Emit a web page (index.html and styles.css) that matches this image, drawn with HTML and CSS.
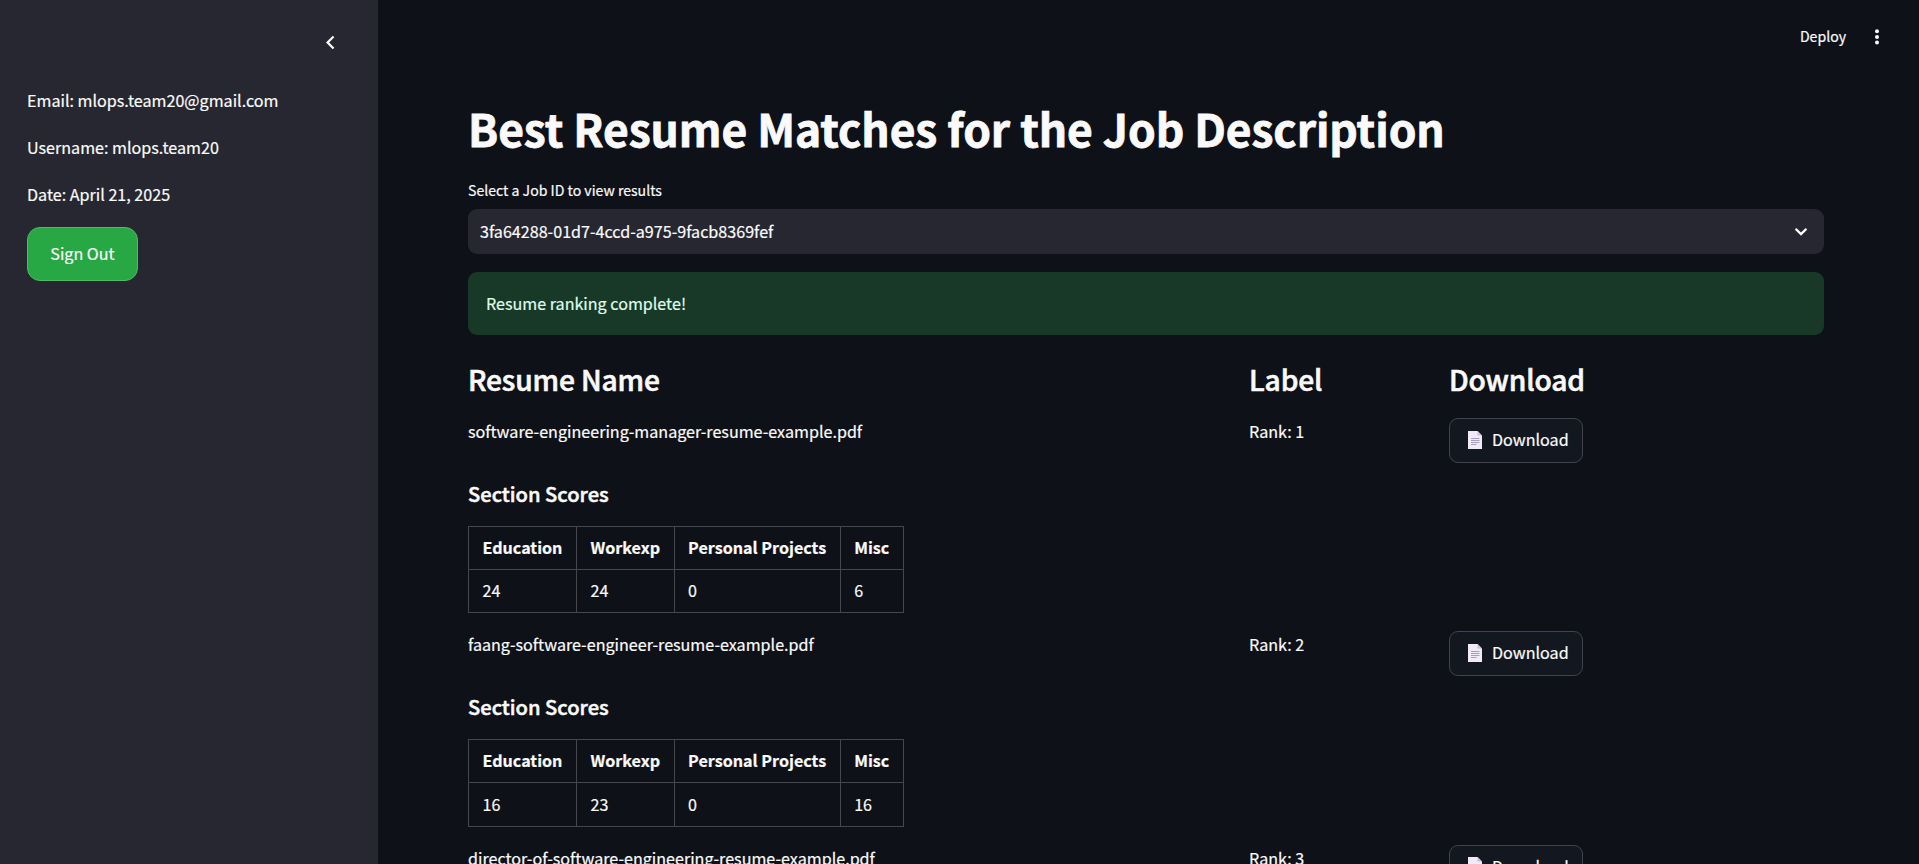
FILE: index.html
```
<!DOCTYPE html>
<html lang="en">
<head>
<meta charset="utf-8">
<title>Resume Matches</title>
<link rel="stylesheet" href="styles.css">
</head>
<body>
<svg class="defs" width="0" height="0">
  <symbol id="page" viewBox="0 0 16 20">
    <path d="M1 1h9.5l4.5 4.5V19H1z" fill="#f1eaf8"/>
    <path d="M10.5 1v4.5H15z" fill="#cbbedb"/>
    <path d="M4 8.5h8.5M4 10.5h8.5M4 12.5h8.5M4 14.5h5.5" stroke="#aa9fb8" fill="none"/>
  </symbol>
</svg>
<div class="app">
  <aside class="sidebar">
    <div class="collapse"><svg width="27" height="27" viewBox="0 0 24 24"><path d="M15.4 7.4 14 6l-6 6 6 6 1.4-1.4L10.8 12z" fill="#fafafa"/></svg></div>
    <p>Email: mlops.team20@gmail.com</p>
    <p>Username: mlops.team20</p>
    <p>Date: April 21, 2025</p>
    <button class="signout">Sign Out</button>
  </aside>
  <main class="main">
    <header class="toolbar">
      <span>Deploy</span>
      <svg width="6" height="18" viewBox="0 0 6 18" fill="#fafafa"><circle cx="3" cy="3.2" r="2"/><circle cx="3" cy="9" r="2"/><circle cx="3" cy="14.6" r="2"/></svg>
    </header>
    <div class="content">
      <h1>Best Resume Matches for the Job Description</h1>
      <label class="label">Select a Job ID to view results</label>
      <div class="select"><span>3fa64288-01d7-4ccd-a975-9facb8369fef</span>
        <svg width="12" height="8" viewBox="0 0 12 8"><path d="M1.2 1.4 6 6.1l4.8-4.7" stroke="#fafafa" stroke-width="2.2" fill="none" stroke-linecap="round"/></svg>
      </div>
      <div class="alert">Resume ranking complete!</div>
      <div class="row heads"><h2>Resume Name</h2><h2>Label</h2><h2>Download</h2></div>

      <section class="entry">
        <div class="row"><p>software-engineering-manager-resume-example.pdf</p><p>Rank: 1</p><button class="download"><svg width="16" height="20"><use href="#page"/></svg>Download</button></div>
        <h3>Section Scores</h3>
        <table>
          <tr><th>Education</th><th>Workexp</th><th>Personal Projects</th><th>Misc</th></tr>
          <tr><td>24</td><td>24</td><td>0</td><td>6</td></tr>
        </table>
      </section>

      <section class="entry">
        <div class="row"><p>faang-software-engineer-resume-example.pdf</p><p>Rank: 2</p><button class="download"><svg width="16" height="20"><use href="#page"/></svg>Download</button></div>
        <h3>Section Scores</h3>
        <table>
          <tr><th>Education</th><th>Workexp</th><th>Personal Projects</th><th>Misc</th></tr>
          <tr><td>16</td><td>23</td><td>0</td><td>16</td></tr>
        </table>
      </section>

      <section class="entry">
        <div class="row"><p>director-of-software-engineering-resume-example.pdf</p><p>Rank: 3</p><button class="download"><svg width="16" height="20"><use href="#page"/></svg>Download</button></div>
      </section>
    </div>
  </main>
</div>
</body>
</html>
```

FILE: styles.css
```
* { box-sizing: border-box; }
body {
  margin: 0;
  background: #0e1117;
  color: #fafafa;
  font: 16.12px/28.8px "Noto Sans CJK JP", "Noto Sans", sans-serif;
  -webkit-text-stroke: 0.2px;
}
h1, h2, h3, p { margin: 0; white-space: nowrap; }
button { font: inherit; color: inherit; cursor: pointer; }
.defs { display: block; }
.app { display: flex; height: 864px; overflow: hidden; }

.sidebar { flex: none; width: 378px; padding: 0 27px; background: #262730; }
.collapse { display: flex; justify-content: flex-end; height: 86px; padding: 29px 7px 0 0; }
.sidebar p { height: 47px; }
.signout {
  display: block;
  width: 111px;
  height: 54px;
  padding: 0 0 2px;
  border: 1px solid #52b96a;
  border-radius: 13px;
  background: #28a745;
}

.main { flex: 1; min-width: 0; }
.toolbar {
  display: flex;
  align-items: center;
  justify-content: flex-end;
  gap: 28px;
  height: 74px;
  padding-right: 39px;
  font-size: 14.1px;
}
.toolbar span { padding-bottom: 1px; }
.content { padding: 0 95px 0 90px; }
h1 {
  height: 101px;
  font-size: 44.33px;
  line-height: 109px;
  font-weight: 700;
  letter-spacing: -0.05px;
  -webkit-text-stroke: 0.8px;
}
.label { display: block; height: 34px; font-size: 14.1px; line-height: 31px; }
.select {
  display: flex;
  align-items: center;
  justify-content: space-between;
  height: 45px;
  margin-bottom: 18px;
  padding: 0 17px 0 12px;
  border-radius: 9px;
  background: #262730;
}
.alert {
  height: 63px;
  padding: 17px 18px;
  border-radius: 9px;
  background: #183828;
  color: #dffde9;
}
.row { display: grid; grid-template-columns: 763px 182px 1fr; column-gap: 18px; }
.heads { height: 83px; padding-top: 25px; }
h2 {
  font-size: 28.2px;
  line-height: 38px;
  font-weight: 500;
  letter-spacing: -0.15px;
  -webkit-text-stroke: 0.6px;
}
.entry { height: 213.3px; }
.entry .row { height: 64px; }
.entry .row p { margin-top: -1px; }
.download {
  display: flex;
  align-items: center;
  gap: 9px;
  width: 134px;
  height: 45px;
  padding: 0 0 2px 17px;
  border: 1px solid #41444c;
  border-radius: 9px;
  background: #131720;
}
h3 {
  height: 44px;
  font-size: 20.15px;
  line-height: 23px;
  font-weight: 500;
  -webkit-text-stroke: 0.5px;
}
table { border-collapse: collapse; }
th, td { height: 43.2px; padding: 0 13.5px 1px; border: 1px solid #45474c; text-align: left; }
th { padding-bottom: 2px; font-weight: 700; }
```
